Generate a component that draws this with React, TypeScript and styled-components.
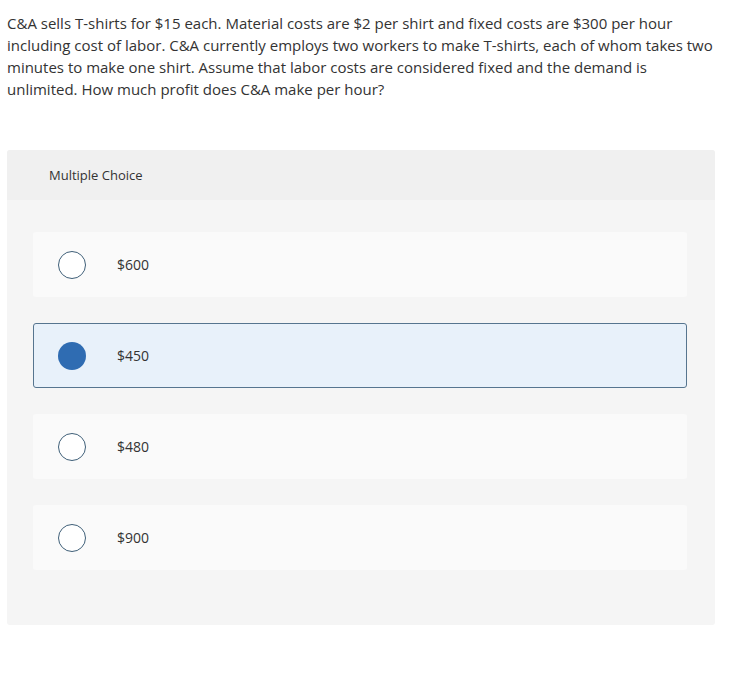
import styled, { createGlobalStyle } from "styled-components";

const GlobalStyle = createGlobalStyle`
  body {
    margin: 0;
    background: #ffffff;
    font-family: "Open Sans", "Liberation Sans", sans-serif;
    color: #333333;
  }
`;

const Page = styled.div`
  padding: 12px 31px 0 7px;
`;

const Question = styled.p`
  margin: 0 0 50px;
  font-size: 15px;
  line-height: 22px;
  color: #333333;
`;

const Panel = styled.div`
  background: #f5f5f5;
  border-radius: 3px;
  overflow: hidden;
`;

const PanelHeader = styled.div`
  height: 50px;
  display: flex;
  align-items: center;
  padding-left: 42px;
  background: #f0f0f0;
  font-size: 13px;
  color: #333333;
`;

const Choices = styled.div`
  display: flex;
  flex-direction: column;
  gap: 26px;
  padding: 32px 28px 55px 26px;
`;

const Choice = styled.label<{ $selected?: boolean }>`
  height: 65px;
  box-sizing: border-box;
  display: flex;
  align-items: center;
  gap: 31px;
  padding-left: 24px;
  border-radius: 3px;
  background: ${(p) => (p.$selected ? "#e8f1fa" : "#fafafa")};
  border: 1px solid ${(p) => (p.$selected ? "#56758f" : "transparent")};
  cursor: pointer;
`;

const Radio = styled.span<{ $selected?: boolean }>`
  width: 28px;
  height: 28px;
  box-sizing: border-box;
  border-radius: 50%;
  border: ${(p) => (p.$selected ? "none" : "1.5px solid #3f5f78")};
  background: ${(p) => (p.$selected ? "#2f6cb2" : "#ffffff")};
`;

const Value = styled.span`
  font-size: 14px;
  color: #333333;
`;

const options = ["$600", "$450", "$480", "$900"];

export default function App() {
  const selected = 1;
  return (
    <Page>
      <GlobalStyle />
      <Question>
        C&amp;A sells T-shirts for $15 each. Material costs are $2 per shirt and fixed costs are $300 per hour
        including cost of labor. C&amp;A currently employs two workers to make T-shirts, each of whom takes two
        minutes to make one shirt. Assume that labor costs are considered fixed and the demand is
        unlimited. How much profit does C&amp;A make per hour?
      </Question>
      <Panel>
        <PanelHeader>Multiple Choice</PanelHeader>
        <Choices>
          {options.map((o, i) => (
            <Choice key={o} $selected={i === selected}>
              <Radio $selected={i === selected} />
              <Value>{o}</Value>
            </Choice>
          ))}
        </Choices>
      </Panel>
    </Page>
  );
}
